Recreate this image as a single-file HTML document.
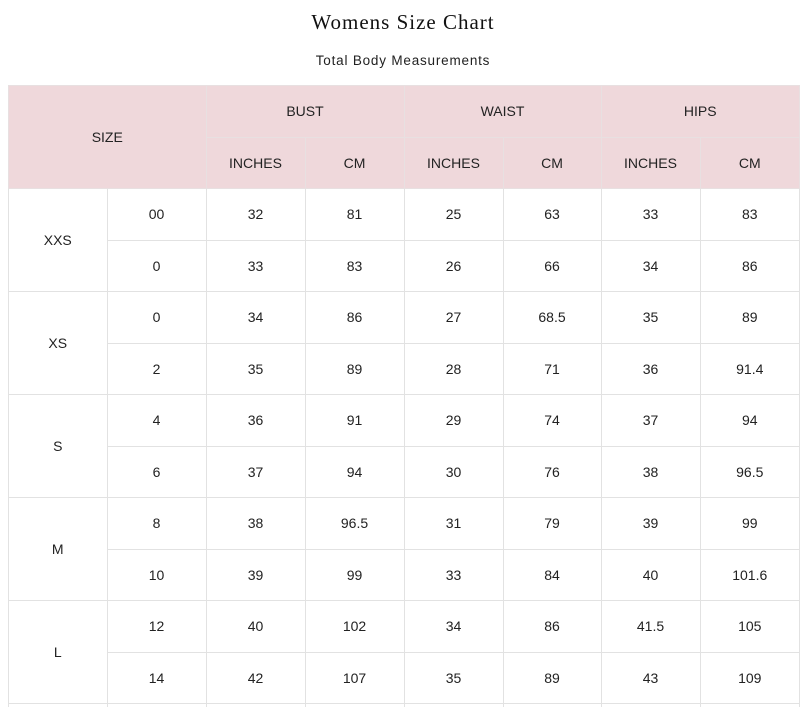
<!DOCTYPE html>
<html><head><meta charset="utf-8"><style>
html,body{margin:0;width:800px;height:707px;overflow:hidden;background:#fff;font-family:"Liberation Sans",sans-serif;color:#222;}
h1{position:absolute;top:10px;left:0;width:806px;margin:0;text-align:center;font-family:"Liberation Serif",serif;font-weight:normal;font-size:21px;letter-spacing:1px;color:#111}
.sub{position:absolute;top:53px;left:0;width:806px;text-align:center;font-size:13.5px;letter-spacing:0.8px;color:#222}
.wrap{position:absolute;top:0;left:0;width:800px;height:707px;overflow:hidden}
table{position:absolute;top:85px;left:8px;width:791px;border-collapse:collapse;table-layout:fixed}
td{border:1px solid #e2e2e2;text-align:center;font-size:14px;height:50.5px;padding:0;vertical-align:middle}
thead td{background:#efd8db;border-color:#e8e0e1}
tr.last td{height:10px}
</style></head><body><div class="wrap">
<h1>Womens Size Chart</h1>
<div class="sub">Total Body Measurements</div>
<table>
<colgroup><col style="width:98.5px"><col style="width:99px"><col style="width:99px"><col style="width:99px"><col style="width:99px"><col style="width:98px"><col style="width:99px"><col style="width:99.5px"></colgroup>
<thead>
<tr><td colspan="2" rowspan="2">SIZE</td><td colspan="2">BUST</td><td colspan="2">WAIST</td><td colspan="2">HIPS</td></tr>
<tr><td>INCHES</td><td>CM</td><td>INCHES</td><td>CM</td><td>INCHES</td><td>CM</td></tr>
</thead>
<tbody>
<tr><td rowspan="2">XXS</td><td>00</td><td>32</td><td>81</td><td>25</td><td>63</td><td>33</td><td>83</td></tr>
<tr><td>0</td><td>33</td><td>83</td><td>26</td><td>66</td><td>34</td><td>86</td></tr>
<tr><td rowspan="2">XS</td><td>0</td><td>34</td><td>86</td><td>27</td><td>68.5</td><td>35</td><td>89</td></tr>
<tr><td>2</td><td>35</td><td>89</td><td>28</td><td>71</td><td>36</td><td>91.4</td></tr>
<tr><td rowspan="2">S</td><td>4</td><td>36</td><td>91</td><td>29</td><td>74</td><td>37</td><td>94</td></tr>
<tr><td>6</td><td>37</td><td>94</td><td>30</td><td>76</td><td>38</td><td>96.5</td></tr>
<tr><td rowspan="2">M</td><td>8</td><td>38</td><td>96.5</td><td>31</td><td>79</td><td>39</td><td>99</td></tr>
<tr><td>10</td><td>39</td><td>99</td><td>33</td><td>84</td><td>40</td><td>101.6</td></tr>
<tr><td rowspan="2">L</td><td>12</td><td>40</td><td>102</td><td>34</td><td>86</td><td>41.5</td><td>105</td></tr>
<tr><td>14</td><td>42</td><td>107</td><td>35</td><td>89</td><td>43</td><td>109</td></tr>
<tr class="last"><td></td><td></td><td></td><td></td><td></td><td></td><td></td><td></td></tr>
</tbody>
</table>
</div></body></html>
